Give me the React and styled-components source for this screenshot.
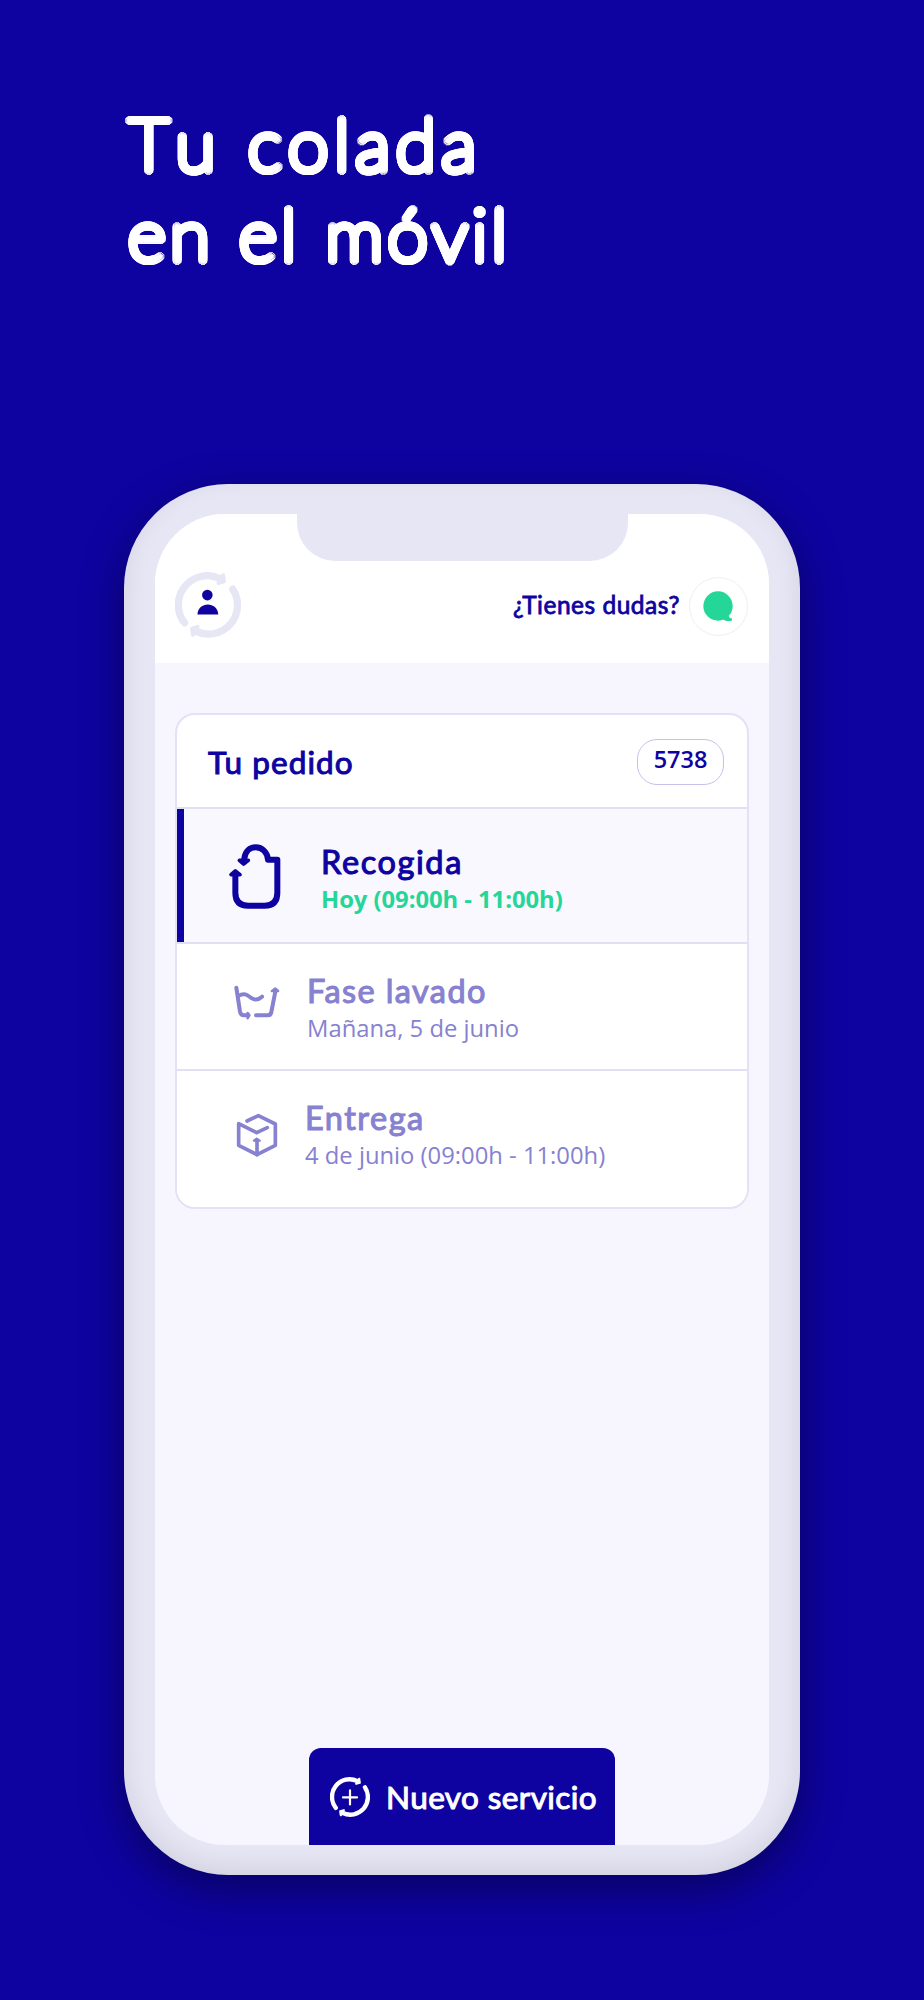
import React from 'react'
import styled, { createGlobalStyle, css } from 'styled-components'

const GlobalStyle = createGlobalStyle`
  * {
    box-sizing: border-box;
  }

  body {
    margin: 0;
    background: #0e03a0;
  }

  h1, h2, h3, p {
    margin: 0;
  }
`

// hairline letters thickened evenly in every direction, which rounds their ends
const ring = (r, n) =>
  Array.from({ length: n }, (_, i) => {
    const a = (i * 2 * Math.PI) / n
    return `${(r * Math.cos(a)).toFixed(4)}em ${(r * Math.sin(a)).toFixed(4)}em 0 currentColor`
  })

const rounded = css`
  font-family: Lato, sans-serif;
  font-weight: 100;
  font-kerning: none;
  -webkit-text-stroke: .036em currentColor;
  text-shadow: ${[...ring(0.055, 32), ...ring(0.028, 16)].join(', ')};
`

const title = css`
  font-family: Lato, sans-serif;
  font-weight: 400;
  -webkit-text-stroke: .033em currentColor;
  white-space: nowrap;
`

const steps = [
  { title: 'Recogida', text: 'Hoy (09:00h - 11:00h)', icon: BagIcon, active: true, height: 135, indent: 144, top: 33, left: 50, iconTop: 34, spacing: 1.6 },
  { title: 'Fase lavado', text: 'Mañana, 5 de junio', icon: WashIcon, height: 127, indent: 130, top: 27, left: 55, iconTop: 40, spacing: 1.4 },
  { title: 'Entrega', text: '4 de junio (09:00h - 11:00h)', icon: BoxIcon, height: 137, indent: 128, top: 27, left: 57, iconTop: 41, spacing: 1.5 },
]

function CycleIcon({ size, children }) {
  return (
    <svg width={size} height={size} viewBox="0 0 200 200" fill="none" stroke="currentColor" strokeWidth="22" strokeLinecap="round" strokeLinejoin="round">
      <path d="M29 154A88 88 0 0 1 136 20" />
      <path d="M175 52A88 88 0 0 1 64 180" />
      <path d="M146 9l3 20-18 5z M54 191l-3-20 18-5z" strokeWidth="11" fill="currentColor" />
      {children}
    </svg>
  )
}

function BagIcon() {
  return (
    <svg width="56.7" height="68.3" viewBox="200 430 170 205" fill="none" stroke="currentColor" strokeWidth="18" strokeLinecap="round" strokeLinejoin="round">
      <path d="M252 476C255 455 268 443 286 443C306 443 321 458 323 480H351V579Q351 618 313 618H263Q225 618 225 579V526" />
      <path d="M237 482H264L250 493z M212 525H239L225 514z" strokeWidth="11" fill="currentColor" />
    </svg>
  )
}

function WashIcon() {
  return (
    <svg width="50" height="40" viewBox="215 135 150 120" fill="none" stroke="currentColor" strokeWidth="12" strokeLinecap="round" strokeLinejoin="round">
      <path d="M228 146L239 218Q241 229 251 229H262" />
      <path d="M235 170C254 159 264 171 273 177C284 185 295 182 305 173" />
      <path d="M287 229H322Q331 229 333 219L345 158" />
      <path d="M262 222L267 229L262 237z M335 156H353L345 149z" strokeWidth="8" fill="currentColor" />
    </svg>
  )
}

function BoxIcon() {
  return (
    <svg width="46.7" height="46.7" viewBox="221 515 140 140" fill="none" stroke="currentColor" strokeWidth="11" strokeLinecap="round" strokeLinejoin="round">
      <path d="M260 542L294 526L345 551V615L290 643L235 615V550L289 577L321 562" />
      <path d="M290 643V602" />
      <path d="M281 601H298L289 595z" strokeWidth="7" fill="currentColor" />
    </svg>
  )
}

function App() {
  return (
    <Page>
      <GlobalStyle />
      <Headline>
        <HeadlineRow $spacing={6}>Tu colada</HeadlineRow>
        <HeadlineRow $spacing={4.3}>en el móvil</HeadlineRow>
      </Headline>

      <Phone>
        <Screen>
          <Header>
            <Notch />
            <Profile>
              <CycleIcon size={66}>
                <g fill="#0e03a0" stroke="none">
                  <circle cx="98" cy="70" r="16" />
                  <path d="M68 129C69 88 130 88 131 129z" />
                </g>
              </CycleIcon>
            </Profile>
            <Help>
              <HelpText>¿Tienes dudas?</HelpText>
              <ChatButton>
                <svg width="30" height="30" viewBox="0 0 90 90" fill="#25d699">
                  <circle cx="45" cy="45" r="44" />
                  <path d="M60 84C66 91 76 91 85 89Q89 87 86 82Q79 83 78 74z" />
                </svg>
              </ChatButton>
            </Help>
          </Header>

          <Card>
            <CardTop>
              <CardTitle>Tu pedido</CardTitle>
              <OrderNumber>5738</OrderNumber>
            </CardTop>
            {steps.map((step) => (
              <Step key={step.title} $active={step.active} $height={step.height}>
                <StepIcon $width={step.indent} $left={step.left} $top={step.iconTop}>
                  <step.icon />
                </StepIcon>
                <StepBody $top={step.top}>
                  <StepTitle $spacing={step.spacing}>{step.title}</StepTitle>
                  <StepText $active={step.active}>{step.text}</StepText>
                </StepBody>
              </Step>
            ))}
          </Card>

          <NewButton>
            <CycleIcon size={40}>
              <path d="M100 67V137M65 102H135" strokeWidth="11" />
            </CycleIcon>
            <span>Nuevo servicio</span>
          </NewButton>
        </Screen>
      </Phone>
    </Page>
  )
}

export default App


const Page = styled.div`
  width: 924px;
  height: 2000px;
  overflow: hidden;
  background: #0e03a0;
  color: #0e03a0;
`

const Headline = styled.h1`
  height: 484px;
  padding: 99px 0 0 128px;
  color: #fff;
  font-size: 73px;
  line-height: 89.5px;
  ${rounded}
`

const HeadlineRow = styled.span`
  display: block;
  white-space: nowrap;
  letter-spacing: ${(props) => props.$spacing}px;
`

const Phone = styled.div`
  width: 676px;
  height: 1391px;
  margin: 0 auto;
  padding: 30px 31px;
  border-radius: 104px;
  background: #e7e6f5;
  box-shadow: 0 14px 44px rgba(0, 0, 0, .4), inset 0 -8px 24px rgba(0, 0, 0, .09);
`

const Screen = styled.div`
  display: flex;
  flex-direction: column;
  align-items: center;
  height: 1331px;
  overflow: hidden;
  border-radius: 70px;
  background: #f7f5fe;
`

const Header = styled.div`
  display: grid;
  grid-template-columns: 1fr 1fr;
  grid-template-rows: 47px 102px;
  width: 100%;
  height: 149px;
  background: #fff;
`

const Notch = styled.div`
  grid-column: 1 / 3;
  justify-self: center;
  width: 331px;
  height: 47px;
  border-radius: 0 0 38px 38px;
  background: #e7e6f5;
`

const Profile = styled.div`
  padding: 11px 0 0 20px;
  color: #e7e6f5;
`

const Help = styled.div`
  display: flex;
  justify-content: flex-end;
  align-items: flex-start;
  gap: 9px;
  padding: 16px 21px 0 0;
`

const HelpText = styled.span`
  ${title}
  font-size: 24.5px;
  line-height: 56px;
  letter-spacing: .5px;
`

const ChatButton = styled.div`
  display: flex;
  align-items: center;
  justify-content: center;
  width: 59px;
  height: 59px;
  padding: 0 2px 2px 0;
  border: 1px solid #efedf9;
  border-radius: 50%;
`

const Card = styled.div`
  width: 574px;
  height: 496px;
  margin-top: 50px;
  overflow: hidden;
  border: 2px solid #e3e1f5;
  border-radius: 20px;
  background: #fff;
`

const CardTop = styled.div`
  display: flex;
  justify-content: space-between;
  height: 92px;
  padding: 24px 23px 0 31px;
`

const CardTitle = styled.h2`
  ${title}
  font-size: 31.5px;
  line-height: 46px;
  letter-spacing: 1.1px;
`

const OrderNumber = styled.div`
  width: 87px;
  height: 46px;
  border: 1px solid #c5c1ea;
  border-radius: 20px;
  font-family: 'Open Sans', sans-serif;
  font-size: 23.5px;
  line-height: 38px;
  font-weight: 600;
  text-align: center;
`

const Step = styled.div`
  display: flex;
  height: ${(props) => props.$height}px;
  border-top: 2px solid #e1dff3;
  background: ${(props) => (props.$active ? '#f9f8fe' : '#fff')};
  box-shadow: ${(props) => (props.$active ? 'inset 7px 0 #0e03a0' : 'none')};
  color: ${(props) => (props.$active ? '#0e03a0' : '#8681d0')};
`

const StepIcon = styled.div`
  width: ${(props) => props.$width}px;
  padding: ${(props) => props.$top}px 0 0 ${(props) => props.$left}px;
`

const StepBody = styled.div`
  padding-top: ${(props) => props.$top}px;
  white-space: nowrap;
`

const StepTitle = styled.h3`
  ${title}
  font-size: 32.5px;
  line-height: 40px;
  letter-spacing: ${(props) => props.$spacing}px;
`

const StepText = styled.p`
  color: ${(props) => (props.$active ? '#25d699' : 'inherit')};
  font-family: 'Open Sans', sans-serif;
  font-size: 23.8px;
  line-height: 35px;
  font-weight: ${(props) => (props.$active ? 700 : 400)};
  letter-spacing: ${(props) => (props.$active ? -.04 : 0)}px;
`

const NewButton = styled.div`
  display: flex;
  align-items: center;
  gap: 16px;
  width: 306px;
  height: 97px;
  margin-top: auto;
  padding-left: 21px;
  border-radius: 12px 12px 0 0;
  background: #0e03a0;
  color: #fff;
  ${title}
  font-size: 31.5px;
  letter-spacing: .4px;
`
